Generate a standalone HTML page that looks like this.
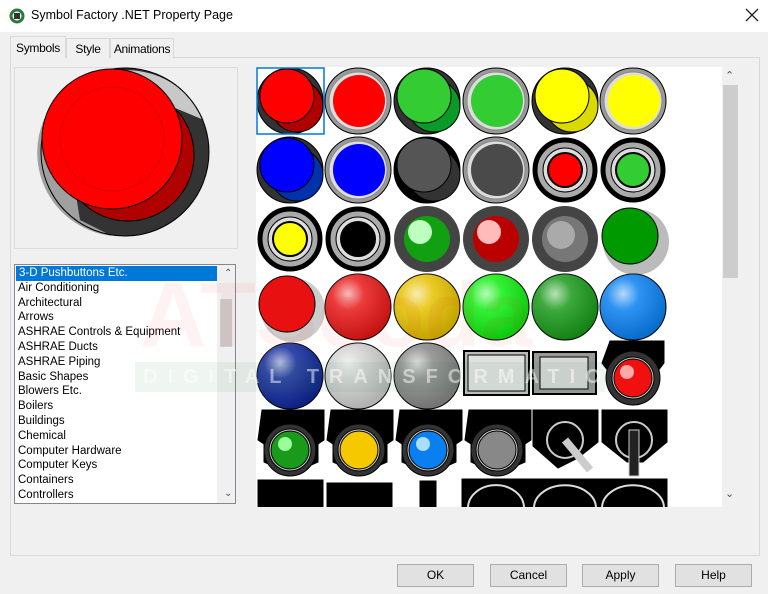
<!DOCTYPE html>
<html><head><style>
*{margin:0;padding:0;box-sizing:border-box}
body{width:768px;height:594px;background:#f0f0f0;font-family:"Liberation Sans",sans-serif;font-size:12px;color:#000;position:relative;overflow:hidden}
.abs{position:absolute}
.title{left:0;top:0;width:768px;height:32px;background:#fff}
.tab{top:38px;height:20px;border:1px solid #d9d9d9;border-bottom:none;background:#f0f0f0;font-size:12px;padding-top:3px;text-align:center;white-space:nowrap;letter-spacing:-0.3px}
.btn{top:564px;height:23px;width:77px;background:#e1e1e1;border:1px solid #adadad;text-align:center;line-height:21px;font-size:12px}
.list div{height:14.8px;line-height:14.8px;padding-left:3px;font-size:11.5px}
</style></head><body>
<div class="abs title">
<svg class="abs" style="left:9px;top:8px" width="16" height="16" viewBox="0 0 16 16"><circle cx="8" cy="8" r="6" fill="none" stroke="#2a7a3a" stroke-width="3"/><rect x="5" y="5" width="6" height="6" fill="#333"/></svg>
<div class="abs" style="left:31px;top:8px;font-size:12.5px">Symbol Factory .NET Property Page</div>
<svg class="abs" style="left:745px;top:8px" width="14" height="14"><path d="M1 1L13 13M13 1L1 13" stroke="#222" stroke-width="1.3"/></svg>
</div>
<div class="abs" style="left:10px;top:57px;width:750px;height:499px;border:1px solid #d9d9d9;background:#f0f0f0"></div>
<div class="abs tab" style="left:10px;top:36px;width:56px;height:22px;background:#f0f0f0;border-color:#d9d9d9;padding-top:4px">Symbols</div>
<div class="abs tab" style="left:66px;width:44px">Style</div>
<div class="abs tab" style="left:110px;width:64px">Animations</div>
<div class="abs" style="left:14px;top:67px;width:224px;height:182px;border:1px solid #dcdcdc;background:#f0f0f0"></div>
<svg class="abs" style="left:0;top:0" width="260" height="260">
<circle cx="125" cy="152" r="84" fill="#333"/>
<path d="M60 95 A84 84 0 0 0 112 236 L80 220 Z" fill="#a0a0a0"/>
<path d="M110 72 A84 84 0 0 1 204 120 L175 108 Z" fill="#c8c8c8"/>
<circle cx="125" cy="152" r="84" fill="none" stroke="#000" stroke-width="1"/>
<circle cx="128" cy="155" r="66" fill="#b00000" stroke="#000"/>
<circle cx="112" cy="139" r="70" fill="#f00" stroke="#000"/>
<circle cx="112" cy="139" r="52" fill="none" stroke="#d00" stroke-width="1"/>
</svg>
<div class="abs list" style="left:14px;top:264px;width:222px;height:240px;border:1px solid #828790;background:#fff;padding-top:1px">
<div style="background:#0078d7;color:#fff;margin:0 18px 0 1px">3-D Pushbuttons Etc.</div>
<div>Air Conditioning</div><div>Architectural</div><div>Arrows</div><div>ASHRAE Controls &amp; Equipment</div><div>ASHRAE Ducts</div><div>ASHRAE Piping</div><div>Basic Shapes</div><div>Blowers Etc.</div><div>Boilers</div><div>Buildings</div><div>Chemical</div><div>Computer Hardware</div><div>Computer Keys</div><div>Containers</div><div>Controllers</div>
<div class="abs" style="left:202px;top:0;width:18px;height:238px;background:#f0f0f0"></div>
<div class="abs" style="left:205px;top:34px;width:12px;height:48px;background:#cdcdcd"></div>
<div class="abs" style="left:206px;top:2px;font-size:10px;color:#555">&#8963;</div>
<div class="abs" style="left:206px;top:222px;font-size:10px;color:#555">&#8964;</div>
</div>
<div class="abs" style="left:256px;top:67px;width:484px;height:440px;background:#fff;overflow:hidden">
<svg class="abs" style="left:0;top:0" width="466" height="440" viewBox="256 67 466 440">
<defs>
<radialGradient id="gl" cx="35%" cy="30%" r="70%"><stop offset="0" stop-color="#fff" stop-opacity=".7"/><stop offset=".35" stop-color="#fff" stop-opacity=".15"/><stop offset="1" stop-color="#000" stop-opacity=".15"/></radialGradient>
</defs>
<g stroke="#000">
<g><circle cx="290" cy="101" r="33" fill="#333"/><circle cx="297" cy="106" r="26" fill="#b00000"/><circle cx="287" cy="96" r="27" fill="#f00"/></g>
<g><circle cx="358" cy="101" r="33" fill="#999"/><circle cx="358" cy="101" r="29" fill="#ddd" stroke="#888"/><circle cx="359" cy="101" r="26" fill="#f00" stroke="none"/></g>
<g><circle cx="427" cy="101" r="33" fill="#333"/><circle cx="434" cy="106" r="26" fill="#0a9a2a"/><circle cx="424" cy="96" r="27" fill="#33cc33"/></g>
<g><circle cx="496" cy="101" r="33" fill="#999"/><circle cx="496" cy="101" r="29" fill="#ddd" stroke="#888"/><circle cx="497" cy="101" r="26" fill="#33cc33" stroke="none"/></g>
<g><circle cx="565" cy="101" r="33" fill="#333"/><circle cx="572" cy="106" r="26" fill="#dada00"/><circle cx="562" cy="96" r="27" fill="#ff0"/></g>
<g><circle cx="633" cy="101" r="33" fill="#999"/><circle cx="633" cy="101" r="29" fill="#ddd" stroke="#888"/><circle cx="634" cy="101" r="26" fill="#ff0" stroke="none"/></g>
<g><circle cx="290" cy="170" r="33" fill="#333"/><circle cx="297" cy="175" r="26" fill="#0033aa"/><circle cx="287" cy="165" r="27" fill="#00f"/></g>
<g><circle cx="358" cy="170" r="33" fill="#999"/><circle cx="358" cy="170" r="29" fill="#ddd" stroke="#888"/><circle cx="359" cy="170" r="26" fill="#00f" stroke="none"/></g>
<g><circle cx="427" cy="170" r="33" fill="#000"/><circle cx="434" cy="175" r="26" fill="#333"/><circle cx="424" cy="165" r="27" fill="#555"/></g>
<g><circle cx="496" cy="170" r="33" fill="#999"/><circle cx="496" cy="170" r="29" fill="#ddd" stroke="#888"/><circle cx="497" cy="170" r="26" fill="#4a4a4a" stroke="none"/></g>
<g><circle cx="565" cy="170" r="32" fill="#000"/><circle cx="565" cy="170" r="28" fill="#aaa"/><circle cx="565" cy="170" r="22" fill="#ddd"/><circle cx="565" cy="170" r="17" fill="#f00" stroke-width="2"/></g>
<g><circle cx="633" cy="170" r="32" fill="#000"/><circle cx="633" cy="170" r="28" fill="#aaa"/><circle cx="633" cy="170" r="22" fill="#ddd"/><circle cx="633" cy="170" r="17" fill="#33cc33" stroke-width="2"/></g>
<g><circle cx="290" cy="239" r="32" fill="#000"/><circle cx="290" cy="239" r="28" fill="#aaa"/><circle cx="290" cy="239" r="22" fill="#ddd"/><circle cx="290" cy="239" r="17" fill="#ff0" stroke-width="2"/></g>
<g><circle cx="358" cy="239" r="32" fill="#000"/><circle cx="358" cy="239" r="28" fill="#aaa"/><circle cx="358" cy="239" r="22" fill="#ddd"/><circle cx="358" cy="239" r="17" fill="#000" stroke-width="2"/></g>
<g stroke="none"><circle cx="427" cy="239" r="33" fill="#444"/><circle cx="427" cy="239" r="23" fill="#11a011"/><circle cx="420" cy="232" r="12" fill="#bfffbf"/></g>
<g stroke="none"><circle cx="496" cy="239" r="33" fill="#444"/><circle cx="496" cy="239" r="23" fill="#b00"/><circle cx="489" cy="232" r="12" fill="#ffbaba"/></g>
<g stroke="none"><circle cx="565" cy="239" r="33" fill="#444"/><circle cx="565" cy="239" r="23" fill="#777"/><circle cx="561" cy="235" r="14" fill="#aaa"/></g>
<g><circle cx="636" cy="242" r="33" fill="#bbb" stroke="none"/><circle cx="630" cy="236" r="28" fill="#009900"/></g>
<g><circle cx="293" cy="310" r="32" fill="#ccc" stroke="none"/><circle cx="287" cy="304" r="28" fill="#e81010"/></g>
<g><circle cx="358" cy="307" r="33" fill="#e81818"/><circle cx="358" cy="307" r="33" fill="url(#gl)" stroke="none"/></g>
<g><circle cx="427" cy="307" r="33" fill="#e6c200"/><circle cx="427" cy="307" r="33" fill="url(#gl)" stroke="none"/></g>
<g><circle cx="496" cy="307" r="33" fill="#11ee11"/><circle cx="496" cy="307" r="33" fill="url(#gl)" stroke="none"/></g>
<g><circle cx="565" cy="307" r="33" fill="#1a9a1a"/><circle cx="565" cy="307" r="33" fill="url(#gl)" stroke="none"/></g>
<g><circle cx="633" cy="307" r="33" fill="#0a80f0"/><circle cx="633" cy="307" r="33" fill="url(#gl)" stroke="none"/></g>
<g><circle cx="290" cy="376" r="33" fill="#10289a"/><circle cx="290" cy="376" r="33" fill="url(#gl)" stroke="none"/></g>
<g><circle cx="358" cy="376" r="33" fill="#d0d0d0"/><circle cx="358" cy="376" r="33" fill="url(#gl)" stroke="none"/></g>
<g><circle cx="427" cy="376" r="33" fill="#888"/><circle cx="427" cy="376" r="33" fill="url(#gl)" stroke="none"/></g>
<rect x="464" y="351" width="65" height="44" fill="#bbb" stroke-width="2"/><rect x="468" y="355" width="57" height="36" fill="#e0e0e0"/>
<rect x="533" y="352" width="63" height="42" fill="#999" stroke-width="2"/><rect x="540" y="357" width="48" height="32" fill="#d8d8d8"/>
<g><path d="M610 341h54v22l-6 8v10l-25 24-25-24v-10l-6-8z" fill="#000"/><circle cx="633" cy="378" r="27" fill="#333"/><circle cx="633" cy="378" r="21" fill="#ccc"/><circle cx="633" cy="378" r="19" fill="#f01010"/><circle cx="627" cy="372" r="7" fill="#ffaaaa" stroke="none"/></g>
<path d="M262 410h62v30l-6 4v18l-27 12-27-12v-18l-6-4z" fill="#000"/><circle cx="290" cy="450" r="26" fill="#333"/><circle cx="290" cy="450" r="21" fill="#ccc"/><circle cx="290" cy="450" r="19" fill="#1a9a1a"/><circle cx="285" cy="444" r="7" fill="#9f9" stroke="none"/>
<path d="M331 410h62v30l-6 4v18l-27 12-27-12v-18l-6-4z" fill="#000"/><circle cx="359" cy="450" r="26" fill="#333"/><circle cx="359" cy="450" r="21" fill="#ccc"/><circle cx="359" cy="450" r="19" fill="#f5c800"/>
<path d="M400 410h62v30l-6 4v18l-27 12-27-12v-18l-6-4z" fill="#000"/><circle cx="428" cy="450" r="26" fill="#333"/><circle cx="428" cy="450" r="21" fill="#ccc"/><circle cx="428" cy="450" r="19" fill="#0a80f0"/><circle cx="423" cy="444" r="7" fill="#aaddff" stroke="none"/>
<path d="M469 410h62v30l-6 4v18l-27 12-27-12v-18l-6-4z" fill="#000"/><circle cx="497" cy="450" r="26" fill="#333"/><circle cx="497" cy="450" r="21" fill="#ccc"/><circle cx="497" cy="450" r="19" fill="#888"/>
<path d="M533 410h65v32l-20 16-20 10-25-22z" fill="#000"/><circle cx="565" cy="440" r="18" fill="#000" stroke="#ccc" stroke-width="2"/><path d="M565 440l25 30" stroke="#ccc" stroke-width="8"/>
<path d="M602 410h65v32l-24 20h-16l-25-20z" fill="#000"/><circle cx="634" cy="440" r="18" fill="#000" stroke="#ccc" stroke-width="2"/><rect x="629" y="430" width="10" height="46" fill="#222" stroke="#ccc"/>
<rect x="258" y="480" width="65" height="30" fill="#000"/><rect x="327" y="483" width="65" height="30" fill="#000"/><rect x="420" y="481" width="16" height="30" fill="#000"/>
<rect x="462" y="479" width="205" height="30" fill="#000"/>
<path d="M468 508a27 22 0 0 1 56 0M534 508a30 22 0 0 1 62 0M602 508a30 22 0 0 1 62 0" fill="none" stroke="#ddd" stroke-width="2"/>
</g>
<rect x="257" y="68" width="67" height="66" fill="none" stroke="#0078d7" stroke-width="1.5"/>
</svg>
<div class="abs" style="left:466px;top:0;width:18px;height:440px;background:#f0f0f0"></div>
<div class="abs" style="left:467px;top:18px;width:15px;height:193px;background:#cdcdcd"></div>
<div class="abs" style="left:469px;top:2px;font-size:11px;color:#555">&#8963;</div>
<div class="abs" style="left:469px;top:420px;font-size:11px;color:#555">&#8964;</div>
</div>
<div class="abs" style="left:135px;top:362px;width:470px;height:30px;background:rgba(30,120,60,.07);color:rgba(255,255,255,.5);font-size:20px;font-weight:bold;letter-spacing:10px;line-height:30px;padding-left:8px;white-space:nowrap;overflow:hidden">DIGITAL TRANSFORMATION</div>
<div class="abs" style="left:140px;top:270px;font-size:92px;font-weight:bold;color:rgba(230,40,40,.06);line-height:90px;white-space:nowrap">ATSeoda</div>
<div class="abs btn" style="left:397px">OK</div>
<div class="abs btn" style="left:490px">Cancel</div>
<div class="abs btn" style="left:582px">Apply</div>
<div class="abs btn" style="left:675px">Help</div>
</body></html>
